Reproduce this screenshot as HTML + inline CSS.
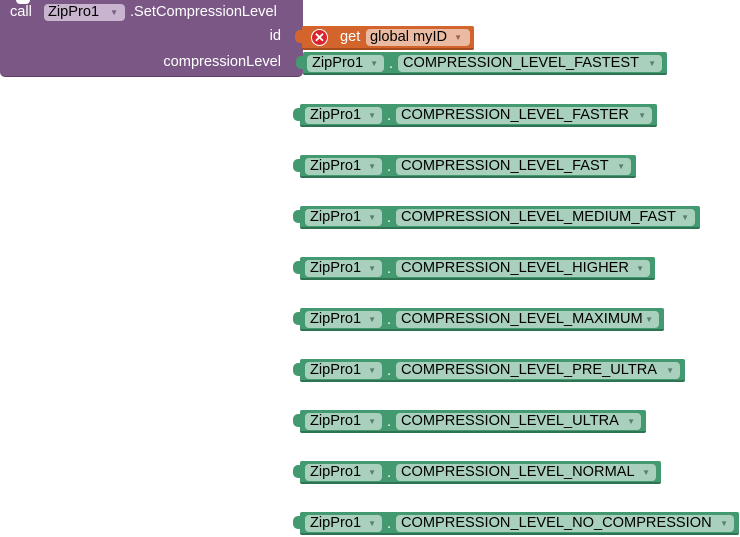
<!DOCTYPE html>
<html><head><style>
body{margin:0;width:740px;height:537px;background:#fff;position:relative;overflow:hidden;font-family:"Liberation Sans",Arial,sans-serif;font-size:14.6px}
.abs{position:absolute}
.pur{left:0;top:0;width:303px;height:77px;background:#7b5785;border-radius:0 0 5px 5px;border-bottom:1px solid #5e4066;box-sizing:border-box}
.notch{position:absolute;top:0;width:14px;height:4px;background:#fff;border-radius:0 0 6px 6px}
.g{position:absolute;height:23px;background:#449a70;border-bottom:2px solid #2f7452;box-sizing:border-box;border-radius:2px;color:#fff}
.tab{position:absolute;left:-7px;top:4px;width:8px;height:13px;background:#449a70;border-radius:5px 0 0 5px}
.f{position:absolute;top:3px;height:17px;line-height:17px;background:#a8d0bd;border-radius:4px;color:#000;padding-left:5px;box-sizing:border-box;white-space:nowrap}
.f i{font-style:normal;font-size:8px;color:#5a7d6c;position:absolute;right:6px;top:0}
.dot{position:absolute;top:3px;color:#fff;line-height:18px}
.w{color:#fff;position:absolute;white-space:nowrap}
</style></head><body>
<div class="abs pur"><div class="notch" style="left:16px"></div></div>
<div class="w" style="left:10px;top:4px">call</div>
<div class="abs" style="left:44px;top:4px;width:81px;height:17px;line-height:17px;background:#c8b4cf;border-radius:4px;padding-left:4px;box-sizing:border-box">ZipPro1<span style="position:absolute;right:7px;font-size:8px;color:#735c7c">▼</span></div>
<div class="w" style="left:130px;top:4px">.SetCompressionLevel</div>
<div class="w" style="right:459px;top:28px">id</div>
<div class="w" style="right:459px;top:54px">compressionLevel</div>
<!-- orange -->
<div class="abs" style="left:302px;top:26px;width:172px;height:24px;background:#d2642c;border-bottom:2px solid #a44b20;box-sizing:border-box;border-radius:2px">
 <div style="position:absolute;left:-7px;top:4px;width:8px;height:13px;background:#d2642c;border-radius:5px 0 0 5px"></div>
 <div style="position:absolute;left:9px;top:3px;width:17px;height:17px;border-radius:50%;background:#d9242b;border:1px solid #fff;box-sizing:border-box;color:#fff;font-size:13px;line-height:15px;text-align:center;font-weight:bold">✕</div>
 <div class="w" style="left:38px;top:3px">get</div>
 <div style="position:absolute;left:64px;top:3px;width:104px;height:17px;line-height:17px;background:#eabba2;border-radius:4px;padding-left:4px;box-sizing:border-box;color:#000">global myID<span style="position:absolute;right:8px;font-size:8px;color:#a06040">▼</span></div>
</div>
<!-- green blocks -->
<div class="g" style="left:303px;top:52px;width:364px"><div class="tab"></div><div class="f" style="left:4px;width:77px">ZipPro1<i>▼</i></div><div class="dot" style="left:86px">.</div><div class="f" style="left:95px;width:264px">COMPRESSION_LEVEL_FASTEST<i>▼</i></div></div>
<div class="g" style="left:300px;top:104px;width:357px"><div class="tab"></div><div class="f" style="left:5px;width:77px">ZipPro1<i>▼</i></div><div class="dot" style="left:87px">.</div><div class="f" style="left:96px;width:256px">COMPRESSION_LEVEL_FASTER<i>▼</i></div></div>
<div class="g" style="left:300px;top:155px;width:336px"><div class="tab"></div><div class="f" style="left:5px;width:77px">ZipPro1<i>▼</i></div><div class="dot" style="left:87px">.</div><div class="f" style="left:96px;width:235px">COMPRESSION_LEVEL_FAST<i>▼</i></div></div>
<div class="g" style="left:300px;top:206px;width:400px"><div class="tab"></div><div class="f" style="left:5px;width:77px">ZipPro1<i>▼</i></div><div class="dot" style="left:87px">.</div><div class="f" style="left:96px;width:299px">COMPRESSION_LEVEL_MEDIUM_FAST<i>▼</i></div></div>
<div class="g" style="left:300px;top:257px;width:355px"><div class="tab"></div><div class="f" style="left:5px;width:77px">ZipPro1<i>▼</i></div><div class="dot" style="left:87px">.</div><div class="f" style="left:96px;width:254px">COMPRESSION_LEVEL_HIGHER<i>▼</i></div></div>
<div class="g" style="left:300px;top:308px;width:364px"><div class="tab"></div><div class="f" style="left:5px;width:77px">ZipPro1<i>▼</i></div><div class="dot" style="left:87px">.</div><div class="f" style="left:96px;width:263px">COMPRESSION_LEVEL_MAXIMUM<i>▼</i></div></div>
<div class="g" style="left:300px;top:359px;width:385px"><div class="tab"></div><div class="f" style="left:5px;width:77px">ZipPro1<i>▼</i></div><div class="dot" style="left:87px">.</div><div class="f" style="left:96px;width:284px">COMPRESSION_LEVEL_PRE_ULTRA<i>▼</i></div></div>
<div class="g" style="left:300px;top:410px;width:346px"><div class="tab"></div><div class="f" style="left:5px;width:77px">ZipPro1<i>▼</i></div><div class="dot" style="left:87px">.</div><div class="f" style="left:96px;width:245px">COMPRESSION_LEVEL_ULTRA<i>▼</i></div></div>
<div class="g" style="left:300px;top:461px;width:361px"><div class="tab"></div><div class="f" style="left:5px;width:77px">ZipPro1<i>▼</i></div><div class="dot" style="left:87px">.</div><div class="f" style="left:96px;width:260px">COMPRESSION_LEVEL_NORMAL<i>▼</i></div></div>
<div class="g" style="left:300px;top:512px;width:439px"><div class="tab"></div><div class="f" style="left:5px;width:77px">ZipPro1<i>▼</i></div><div class="dot" style="left:87px">.</div><div class="f" style="left:96px;width:338px">COMPRESSION_LEVEL_NO_COMPRESSION<i>▼</i></div></div>
</body></html>
